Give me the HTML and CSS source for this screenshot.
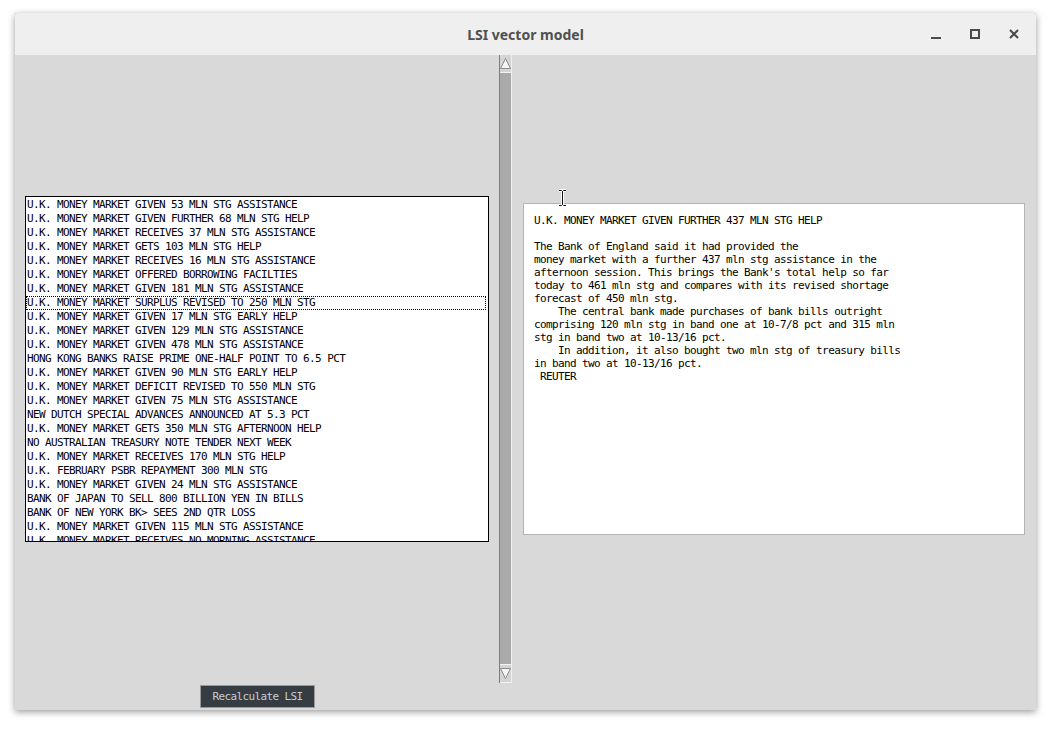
FILE: index.html
```html
<!DOCTYPE html>
<html>
<head>
<meta charset="utf-8">
<title>LSI vector model</title>
<link rel="stylesheet" href="styles.css">
</head>
<body>
<div class="window">
  <div class="titlebar">
    <div class="title">LSI vector model</div>
    <div class="controls">
      <span class="ctl ctl-min"></span>
      <span class="ctl ctl-max"></span>
      <span class="ctl ctl-close">
        <svg width="10" height="10" viewBox="0 0 10 10"><path d="M1 1L9 9M9 1L1 9" stroke="#4a4a4a" stroke-width="2"/></svg>
      </span>
    </div>
  </div>
  <div class="content">
    <div class="left">
      <div class="listbox">
        <div class="row">U.K. MONEY MARKET GIVEN 53 MLN STG ASSISTANCE</div>
        <div class="row">U.K. MONEY MARKET GIVEN FURTHER 68 MLN STG HELP</div>
        <div class="row">U.K. MONEY MARKET RECEIVES 37 MLN STG ASSISTANCE</div>
        <div class="row">U.K. MONEY MARKET GETS 103 MLN STG HELP</div>
        <div class="row">U.K. MONEY MARKET RECEIVES 16 MLN STG ASSISTANCE</div>
        <div class="row">U.K. MONEY MARKET OFFERED BORROWING FACILTIES</div>
        <div class="row">U.K. MONEY MARKET GIVEN 181 MLN STG ASSISTANCE</div>
        <div class="row focused">U.K. MONEY MARKET SURPLUS REVISED TO 250 MLN STG</div>
        <div class="row">U.K. MONEY MARKET GIVEN 17 MLN STG EARLY HELP</div>
        <div class="row">U.K. MONEY MARKET GIVEN 129 MLN STG ASSISTANCE</div>
        <div class="row">U.K. MONEY MARKET GIVEN 478 MLN STG ASSISTANCE</div>
        <div class="row">HONG KONG BANKS RAISE PRIME ONE-HALF POINT TO 6.5 PCT</div>
        <div class="row">U.K. MONEY MARKET GIVEN 90 MLN STG EARLY HELP</div>
        <div class="row">U.K. MONEY MARKET DEFICIT REVISED TO 550 MLN STG</div>
        <div class="row">U.K. MONEY MARKET GIVEN 75 MLN STG ASSISTANCE</div>
        <div class="row">NEW DUTCH SPECIAL ADVANCES ANNOUNCED AT 5.3 PCT</div>
        <div class="row">U.K. MONEY MARKET GETS 350 MLN STG AFTERNOON HELP</div>
        <div class="row">NO AUSTRALIAN TREASURY NOTE TENDER NEXT WEEK</div>
        <div class="row">U.K. MONEY MARKET RECEIVES 170 MLN STG HELP</div>
        <div class="row">U.K. FEBRUARY PSBR REPAYMENT 300 MLN STG</div>
        <div class="row">U.K. MONEY MARKET GIVEN 24 MLN STG ASSISTANCE</div>
        <div class="row">BANK OF JAPAN TO SELL 800 BILLION YEN IN BILLS</div>
        <div class="row">BANK OF NEW YORK BK&gt; SEES 2ND QTR LOSS</div>
        <div class="row">U.K. MONEY MARKET GIVEN 115 MLN STG ASSISTANCE</div>
        <div class="row">U.K. MONEY MARKET RECEIVES NO MORNING ASSISTANCE</div>
      </div>
      <button class="btn">Recalculate LSI</button>
    </div>
    <div class="scrollbar">
      <div class="arrow arrow-up">
        <svg width="11" height="11" viewBox="0 0 11 11"><path d="M5.5 0.5L10.5 10.5H0.5Z" fill="#f4f4f4" stroke="#8a8a8a" stroke-width="1"/></svg>
      </div>
      <div class="track"></div>
      <div class="arrow arrow-down">
        <svg width="11" height="11" viewBox="0 0 11 11"><path d="M5.5 10.5L10.5 0.5H0.5Z" fill="#f4f4f4" stroke="#8a8a8a" stroke-width="1"/></svg>
      </div>
    </div>
    <div class="right">
      <pre class="article">U.K. MONEY MARKET GIVEN FURTHER 437 MLN STG HELP

The Bank of England said it had provided the
money market with a further 437 mln stg assistance in the
afternoon session. This brings the Bank's total help so far
today to 461 mln stg and compares with its revised shortage
forecast of 450 mln stg.
    The central bank made purchases of bank bills outright
comprising 120 mln stg in band one at 10-7/8 pct and 315 mln
stg in band two at 10-13/16 pct.
    In addition, it also bought two mln stg of treasury bills
in band two at 10-13/16 pct.
 REUTER</pre>
    </div>
  </div>
</div>
<svg class="cursor" width="9" height="18" viewBox="0 0 9 18"><path d="M1 1.5H3.5L4.5 2.5L5.5 1.5H8M4.5 2.5V15.5M1 16.5H3.5L4.5 15.5L5.5 16.5H8" fill="none" stroke="#fff" stroke-width="3"/><path d="M1 1.5H3.5L4.5 2.5L5.5 1.5H8M4.5 2.5V15.5M1 16.5H3.5L4.5 15.5L5.5 16.5H8" fill="none" stroke="#111" stroke-width="1"/></svg>
</body>
</html>
```

FILE: styles.css
```css
html, body {
  margin: 0;
  padding: 0;
  background: #ffffff;
}

body {
  width: 1055px;
  height: 729px;
  overflow: hidden;
  position: relative;
}

.window {
  margin: 13px 0 0 15px;
  width: 1021px;
  height: 697px;
  display: flex;
  flex-direction: column;
  box-shadow: 0 2px 7px rgba(0, 0, 0, 0.4);
  background: #d9d9d9;
}

.titlebar {
  height: 42px;
  flex: none;
  background: #efefef;
  display: flex;
  align-items: center;
  justify-content: center;
  position: relative;
  border-radius: 3px 3px 0 0;
}

.title {
  font-family: "Noto Sans", "Open Sans", sans-serif;
  font-weight: bold;
  font-size: 14px;
  color: #505050;
  margin-left: 0;
  margin-top: 1px;
}

.controls {
  position: absolute;
  right: 16px;
  top: 14px;
  display: flex;
  gap: 27px;
  align-items: center;
}

.ctl {
  width: 12px;
  height: 14px;
  display: flex;
  align-items: center;
  justify-content: center;
}

.ctl-min::before {
  content: "";
  width: 10px;
  height: 2px;
  background: #4a4a4a;
  margin-top: 8px;
}

.ctl-max::before {
  content: "";
  width: 6px;
  height: 6px;
  border: 2px solid #4a4a4a;
}

.content {
  flex: 1;
  display: flex;
  background: #d9d9d9;
  font-family: "DejaVu Sans Mono", "Liberation Mono", monospace;
  font-size: 11px;
  letter-spacing: -0.62px;
}

.left {
  width: 464px;
  padding-left: 10px;
  padding-top: 141px;
  display: flex;
  flex-direction: column;
  align-items: flex-start;
}

.listbox {
  width: 462px;
  height: 343px;
  padding-top: 1px;
  border: 1px solid #000;
  background: #fff;
  overflow: hidden;
  flex: none;
}

.row {
  height: 14px;
  line-height: 14px;
  padding-left: 1px;
  white-space: pre;
  color: #000;
  box-sizing: border-box;
}

.row.focused {
  outline: 1px dotted #000;
  outline-offset: -1px;
  margin-right: 2px;
}

.btn {
  margin-top: 143px;
  margin-left: 175px;
  width: 115px;
  height: 23px;
  background: #353c42;
  border: 1px solid #9a9a9a;
  color: #c6ced6;
  font-family: "DejaVu Sans Mono", "Liberation Mono", monospace;
  font-size: 11px;
  letter-spacing: -0.62px;
  padding: 0;
}

.scrollbar {
  margin-left: 10px;
  width: 13px;
  height: 628px;
  display: flex;
  flex-direction: column;
  background: #aaaaaa;
  border-left: 1px solid #7d7d7d;
  border-right: 1px solid #f0f0f0;
  box-sizing: border-box;
}

.arrow {
  height: 17px;
  flex: none;
  display: flex;
  align-items: center;
  justify-content: center;
  background: #d4d4d4;
}

.arrow-up {
  border-bottom: 1px solid #f4f4f4;
}

.arrow-down {
  border-top: 1px solid #f4f4f4;
  border-bottom: 1px solid #f4f4f4;
}

.track {
  flex: 1;
}

.right {
  margin-left: 11px;
  padding-top: 148px;
}

.article {
  margin: 0;
  width: 502px;
  height: 332px;
  box-sizing: border-box;
  border: 1px solid #b4b4b4;
  background: #fff;
  padding: 10px 10px;
  font-family: "DejaVu Sans Mono", "Liberation Mono", monospace;
  font-size: 11px;
  letter-spacing: -0.62px;
  line-height: 13px;
  color: #000;
  overflow: hidden;
}

.cursor {
  position: absolute;
  left: 558px;
  top: 189px;
}
```
